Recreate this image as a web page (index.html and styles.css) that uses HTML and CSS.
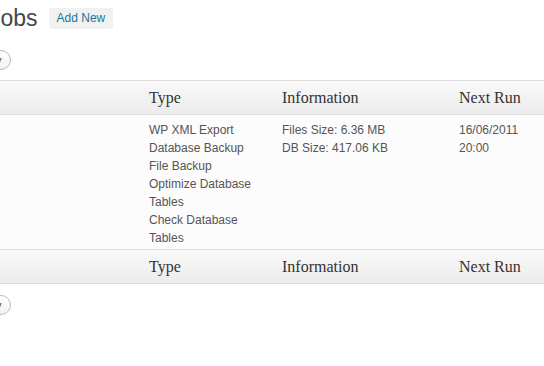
FILE: index.html
```html
<!DOCTYPE html>
<html lang="en">
<head>
    <meta charset="UTF-8">
    <meta name="viewport" content="width=device-width, initial-scale=1.0">
    <title>BackWPup Jobs</title>
    <link rel="stylesheet" href="styles.css">
</head>
<body>
    <div class="page-title">
        <h2>Jobs</h2>
        <a class="add-new" href="#">Add New</a>
    </div>

    <div class="tablenav">
        <button class="button" type="button">Apply</button>
    </div>

    <table class="widefat">
        <colgroup>
            <col class="col-name">
            <col class="col-type">
            <col class="col-info">
            <col>
        </colgroup>
        <thead>
            <tr>
                <th></th>
                <th>Type</th>
                <th>Information</th>
                <th>Next Run</th>
            </tr>
        </thead>
        <tbody>
            <tr>
                <td></td>
                <td>WP XML Export<br>Database Backup<br>File Backup<br>Optimize Database Tables<br>Check Database Tables</td>
                <td>Files Size: 6.36 MB<br>DB Size: 417.06 KB</td>
                <td>16/06/2011<br>20:00</td>
            </tr>
        </tbody>
        <tfoot>
            <tr>
                <th></th>
                <th>Type</th>
                <th>Information</th>
                <th>Next Run</th>
            </tr>
        </tfoot>
    </table>

    <div class="tablenav bottom">
        <button class="button" type="button">Apply</button>
    </div>
</body>
</html>
```

FILE: styles.css
```css
html, body {
    overflow: hidden;
}
body {
    margin: 0;
    background: #fff;
    color: #333;
    font-family: "Liberation Sans", Arial, sans-serif;
    font-size: 12px;
}
.page-title {
    display: flex;
    align-items: flex-start;
    gap: 11px;
    margin-top: 4px;
}
.page-title h2 {
    margin: 0 0 0 -11px;
    font-size: 23px;
    font-weight: normal;
    line-height: 29px;
    color: #464646;
}
.add-new {
    margin-top: 4px;
    padding: 4px 8px;
    font-size: 12px;
    line-height: 13px;
    color: #21759b;
    background: #f1f1f1;
    border-radius: 3px;
    text-decoration: none;
}
.tablenav {
    display: flex;
    height: 20px;
    margin: 17px 0 10px;
}
.tablenav.bottom {
    margin: 11px 0 0;
}
.button {
    margin-left: -35px;
    padding: 2px 8px;
    font-family: "Liberation Sans", Arial, sans-serif;
    font-size: 11px;
    line-height: 14px;
    color: #464646;
    background: linear-gradient(#fff, #f2f2f2);
    border: 1px solid #bbb;
    border-radius: 11px;
}
.widefat {
    width: 100%;
    table-layout: fixed;
    border-spacing: 0;
    border-top: 1px solid #dfdfdf;
}
.col-name {
    width: 142px;
}
.col-type {
    width: 133px;
}
.col-info {
    width: 177px;
}
.widefat th {
    padding: 8px 7px 7px;
    font-family: "Liberation Serif", "Times New Roman", serif;
    font-size: 16px;
    font-weight: normal;
    line-height: 18px;
    text-align: left;
    color: #333;
    background: linear-gradient(#f9f9f9, #ececec);
    border-bottom: 1px solid #dfdfdf;
}
.widefat td {
    padding: 6px 7px 2px;
    line-height: 18px;
    vertical-align: top;
    color: #555;
    background: #fcfcfc;
    border-bottom: 1px solid #dfdfdf;
}
```
